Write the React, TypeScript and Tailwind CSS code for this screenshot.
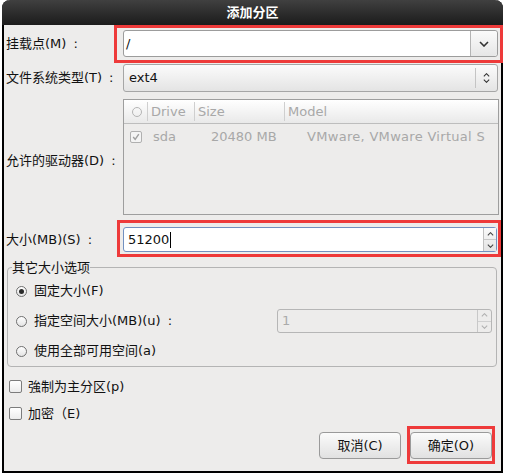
import type { ReactNode } from 'react'

type Dir = 'up' | 'down'

function Chevron({ dir, className }: { dir: Dir; className?: string }) {
    return (
        <svg viewBox="0 0 10 6" className={className} fill="none" stroke="currentColor" strokeWidth="1.6">
            <polyline points={dir === 'down' ? '1,1 5,5 9,1' : '1,5 5,1 9,5'} />
        </svg>
    )
}

// red annotation frame drawn over a control
function Mark({ className }: { className: string }) {
    return <div className={`pointer-events-none absolute border-[3px] border-[#ee3a3a] ${className}`} />
}

function Label({ text, className = '' }: { text: string; className?: string }) {
    return (
        <div className={`w-[117px] shrink-0 ${className}`}>
            {text}
            <span className="ml-[7px]">:</span>
        </div>
    )
}

function Radio({ checked }: { checked?: boolean }) {
    return (
        <span className="flex h-[11px] w-[11px] shrink-0 items-center justify-center rounded-full border border-[#707070] bg-gradient-to-b from-white to-[#e4e4e4]">
            {checked && <span className="h-[5px] w-[5px] rounded-full bg-[#2a2a2a]" />}
        </span>
    )
}

function Check() {
    return <span className="h-[13px] w-[13px] shrink-0 rounded-[2px] border border-[#7c7c7c] bg-gradient-to-b from-white to-[#ececec]" />
}

function Button({ children }: { children: ReactNode }) {
    return (
        <div className="flex h-full w-[82px] items-center justify-center rounded-[4px] border border-[#9a9a9a] bg-gradient-to-b from-[#fbfbfb] to-[#e1e1e1]">
            {children}
        </div>
    )
}

export default function App() {
    return (
        <div className="h-[476px] w-[505px] bg-white font-['DejaVu_Sans','Noto_Sans_CJK_SC',sans-serif] text-[13px] text-[#111]">
            <div className="ml-[2px] flex h-[473px] w-[501px] flex-col rounded-t-[8px] border-x-2 border-b-2 border-black bg-[#edeceb]">
                {/* Title */}
                <div className="mx-[-2px] flex h-[25px] shrink-0 items-center justify-center rounded-t-[8px] bg-gradient-to-b from-[#404040] to-[#1c1c1c] font-bold text-white">
                    添加分区
                </div>

                {/* Mount point */}
                <div className="mt-[5px] flex h-[27px] items-center pl-[2px] pr-[3px]">
                    <Label text="挂载点(M)" />
                    <div className="relative flex h-full flex-1 rounded-[3px] border border-[#9c9c9c] bg-white">
                        <div className="flex flex-1 items-center pl-[2px]">/</div>
                        <div className="flex w-[27px] items-center justify-center rounded-r-[3px] border-l border-[#b4b4b4] bg-gradient-to-b from-[#fbfbfb] to-[#e6e6e6] text-[#333]">
                            <Chevron dir="down" className="h-[6px] w-[10px]" />
                        </div>
                        <Mark className="left-[-10px] right-[-6px] top-[-6px] bottom-[-7px]" />
                    </div>
                </div>

                {/* File system type */}
                <div className="mt-[7px] flex h-[28px] items-center pl-[2px] pr-[3px]">
                    <Label text="文件系统类型(T)" />
                    <div className="flex h-full flex-1 items-center rounded-[3px] border border-[#a6a6a6] bg-gradient-to-b from-[#fbfbfb] to-[#e4e4e4]">
                        <span className="flex-1 pl-[5px]">ext4</span>
                        <span className="h-[20px] w-px bg-[#c4c4c4]" />
                        <span className="flex w-[21px] flex-col items-center gap-[2px] text-[#333]">
                            <Chevron dir="up" className="h-[4px] w-[7px]" />
                            <Chevron dir="down" className="h-[4px] w-[7px]" />
                        </span>
                    </div>
                </div>

                {/* Drives */}
                <div className="mt-[7px] flex h-[116px] pl-[2px] pr-[2px]">
                    <Label text="允许的驱动器(D)" className="mt-[52px] w-[116px]" />
                    <div className="flex flex-1 flex-col border border-[#9e9e9e] text-[#a8a8a8]">
                        <div className="flex h-[24px] shrink-0 items-center border-b border-[#bdbdbd] bg-gradient-to-b from-white to-[#e9e9e9]">
                            <span className="flex w-[23px] justify-center pl-[2px]">
                                <span className="h-[10px] w-[10px] rounded-full border border-[#b4b4b4]" />
                            </span>
                            <span className="h-[19px] w-px bg-[#cfcfcf]" />
                            <span className="w-[46px] pl-[3px]">Drive</span>
                            <span className="h-[19px] w-px bg-[#cfcfcf]" />
                            <span className="w-[89px] pl-[3px]">Size</span>
                            <span className="h-[19px] w-px bg-[#cfcfcf]" />
                            <span className="pl-[3px]">Model</span>
                        </div>
                        <div className="flex h-[25px] items-center pl-[6px]">
                            <span className="flex h-[12px] w-[12px] items-center justify-center rounded-[2px] border border-[#b0b0b0] bg-[#f4f4f4] text-[#a0a0a0]">
                                <svg viewBox="0 0 10 10" className="h-[8px] w-[8px]" fill="none" stroke="currentColor" strokeWidth="1.8">
                                    <polyline points="1.5,5 4,8 8.5,1.5" />
                                </svg>
                            </span>
                            <span className="ml-[11px] w-[58px]">sda</span>
                            <span className="w-[96px]">20480 MB</span>
                            <span className="tracking-[0.3px]">VMware, VMware Virtual S</span>
                        </div>
                    </div>
                </div>

                {/* Size */}
                <div className="mt-[12px] flex h-[25px] items-center pl-[2px] pr-[4px]">
                    <Label text="大小(MB)(S)" />
                    <div className="relative flex h-full flex-1 rounded-[3px] border border-[#7290c0] bg-white">
                        <div className="flex flex-1 items-center pl-[4px]">
                            51200
                            <span className="ml-[1px] h-[16px] w-px bg-black" />
                        </div>
                        <div className="flex w-[13px] flex-col border-l border-[#c0c0c0] bg-gradient-to-b from-[#fafafa] to-[#e4e4e4] text-[#444]">
                            <span className="flex flex-1 items-center justify-center border-b border-[#c8c8c8]">
                                <Chevron dir="up" className="h-[4px] w-[7px]" />
                            </span>
                            <span className="flex flex-1 items-center justify-center">
                                <Chevron dir="down" className="h-[4px] w-[7px]" />
                            </span>
                        </div>
                        <Mark className="left-[-7px] right-[-5px] top-[-8px] bottom-[-6px]" />
                    </div>
                </div>

                {/* Other size options */}
                <fieldset className="mt-[7px] ml-[3px] mr-[4px] rounded-[4px] border border-[#b4b4b4] pl-[4px]">
                    <legend className="leading-[17px]">其它大小选项</legend>
                    <div className="flex h-[30px] items-center gap-[7px] pl-[4px]">
                        <Radio checked />
                        固定大小(F)
                    </div>
                    <div className="flex h-[30px] items-center gap-[7px] pl-[4px] pr-[4px]">
                        <Radio />
                        <span className="flex-1">
                            指定空间大小(MB)(u)<span className="ml-[7px]">:</span>
                        </span>
                        <div className="flex h-[24px] w-[215px] rounded-[3px] border border-[#b6b6b6] text-[#aaa]">
                            <span className="flex flex-1 items-center pl-[4px]">1</span>
                            <span className="flex w-[14px] flex-col border-l border-[#c8c8c8] text-[#b0b0b0]">
                                <span className="flex flex-1 items-center justify-center border-b border-[#d0d0d0]">
                                    <Chevron dir="up" className="h-[4px] w-[7px]" />
                                </span>
                                <span className="flex flex-1 items-center justify-center">
                                    <Chevron dir="down" className="h-[4px] w-[7px]" />
                                </span>
                            </span>
                        </div>
                    </div>
                    <div className="flex h-[30px] items-center gap-[7px] pl-[4px]">
                        <Radio />
                        使用全部可用空间(a)
                    </div>
                </fieldset>

                {/* Checkboxes */}
                <div className="mt-[6px] flex h-[27px] items-center gap-[6px] pl-[5px]">
                    <Check />
                    強制为主分区(p)
                </div>
                <div className="flex h-[27px] items-center gap-[6px] pl-[5px]">
                    <Check />
                    加密（E)
                </div>

                {/* Buttons */}
                <div className="mt-[5px] flex h-[27px] justify-end gap-[9px] pr-[9px]">
                    <Button>取消(C)</Button>
                    <div className="relative">
                        <Button>确定(O)</Button>
                        <Mark className="left-[-3px] right-[-3px] top-[-6px] bottom-[-5px]" />
                    </div>
                </div>
            </div>
        </div>
    )
}
